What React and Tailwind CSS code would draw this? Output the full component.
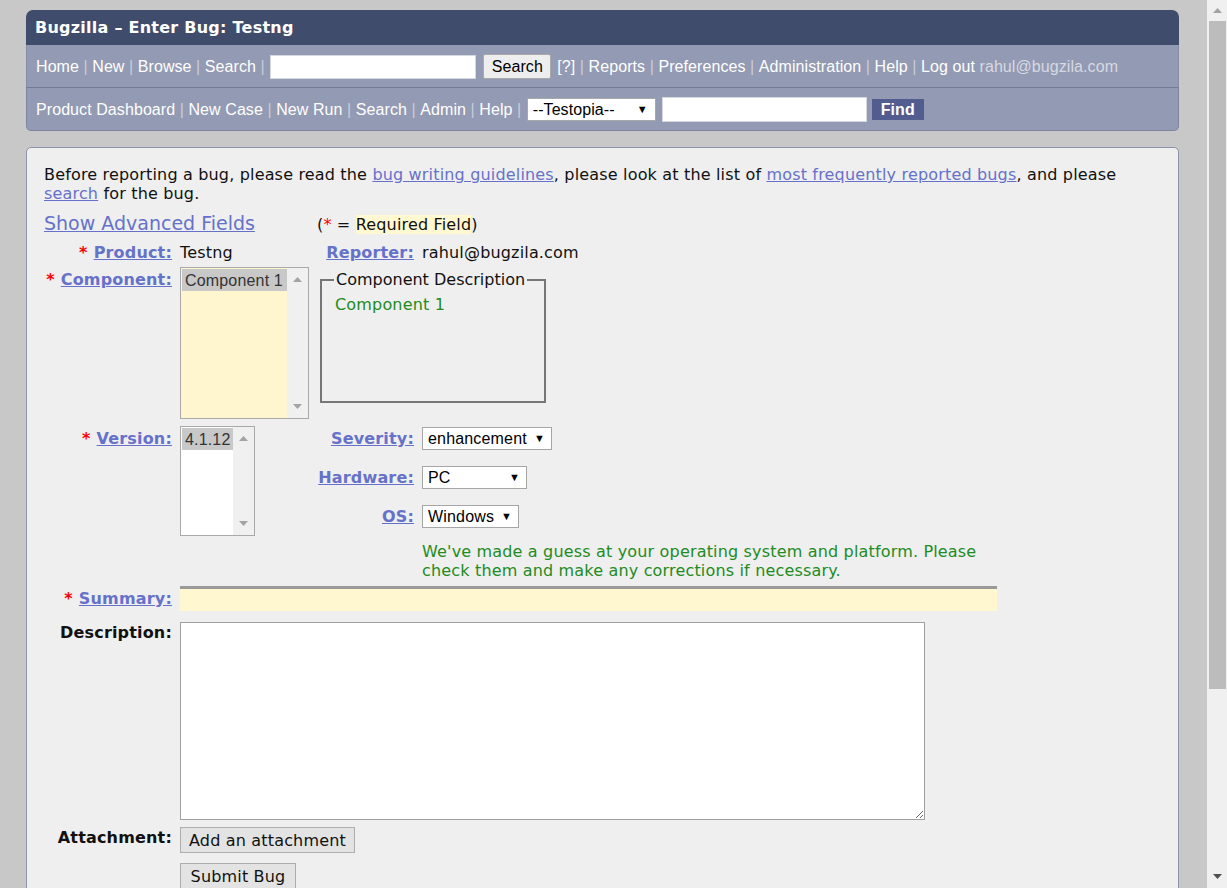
import React from "react";

const ARIAL = "font-['Liberation_Sans',Arial,sans-serif]";
const VERD = "font-['DejaVu_Sans',Verdana,sans-serif]";

function Sep() {
  return <span className="mx-[4.5px] text-[#c9ccda]">|</span>;
}

function Tri({ up, color }) {
  return (
    <svg width="9" height="5" viewBox="0 0 9 5">
      {up ? (
        <polygon points="0,5 9,5 4.5,0" fill={color} />
      ) : (
        <polygon points="0,0 9,0 4.5,5" fill={color} />
      )}
    </svg>
  );
}

function Header() {
  return (
    <div className={`${ARIAL} tracking-[0.08px]`}>
      <div className={`h-[35px] rounded-t-[7px] bg-[#404c6c] pl-[9px] pt-[1px] flex items-center ${VERD} font-bold text-[16px] tracking-[0.25px] text-white`}>
        Bugzilla – Enter Bug: Testng
      </div>
      <div className="h-[43px] bg-[#939ab3] border-x border-b border-x-[#858ca6] border-b-[#727a96] flex items-center pl-[9px] pt-[1px] text-[16px] text-white whitespace-nowrap">
        <span>Home</span>
        <Sep />
        <span>New</span>
        <Sep />
        <span>Browse</span>
        <Sep />
        <span>Search</span>
        <Sep />
        <div className="ml-[1px] w-[206px] h-[24px] bg-white border border-[#d6d8e0]" />
        <div className="ml-[7px] w-[68px] h-[25px] bg-[#eeeeee] border border-[#a9a9a9] rounded-[2px] text-black flex items-center justify-center">
          Search
        </div>
        <span className="ml-[6px]">[?]</span>
        <Sep />
        <span>Reports</span>
        <Sep />
        <span>Preferences</span>
        <Sep />
        <span>Administration</span>
        <Sep />
        <span>Help</span>
        <Sep />
        <span>Log out</span>
        <span className="ml-[4.5px] text-[#d6d9e2]">rahul@bugzila.com</span>
      </div>
      <div className="h-[43px] bg-[#939ab3] border-x border-b border-[#7e859f] rounded-b-[5px] flex items-center pl-[9px] pt-[1px] text-[16px] text-white whitespace-nowrap">
        <span>Product Dashboard</span>
        <Sep />
        <span>New Case</span>
        <Sep />
        <span>New Run</span>
        <Sep />
        <span>Search</span>
        <Sep />
        <span>Admin</span>
        <Sep />
        <span>Help</span>
        <Sep />
        <div className="ml-[1px] w-[129px] h-[23px] bg-white border border-[#a8a8a8] text-black flex items-center pl-[5px] pr-[7px] justify-between">
          <span>--Testopia--</span>
          <span className="text-[11px]">▼</span>
        </div>
        <div className="ml-[6px] w-[205px] h-[25px] bg-white border border-[#d6d8e0]" />
        <div className="ml-[5px] w-[52px] h-[21px] bg-[#525c8e] text-white font-bold flex items-center justify-center">
          Find
        </div>
      </div>
    </div>
  );
}

const LINK = "text-[#6671c9] underline";
const LBL = "w-[136px] shrink-0 text-right pr-[8px] font-bold whitespace-nowrap";

function Req() {
  return <span className="text-[#ff0000] mr-[6px]">*</span>;
}

function ListBox({ w, h, item, itemW, bg }) {
  return (
    <div className={`flex border border-[#a9a9a9] ${bg}`} style={{ width: w, height: h }}>
      <div className="flex-1 pt-[1px] pl-[1px]">
        <div className="h-[22px] bg-[#c8c8c8] text-[#333] pl-[3px] flex items-center font-['Liberation_Sans',Arial,sans-serif] text-[16px]" style={{ width: itemW }}>
          {item}
        </div>
      </div>
      <div className="w-[21px] bg-[#f0f0f0] flex flex-col items-center justify-between py-[9px]">
        <Tri up color="#a3a3a3" />
        <Tri color="#a3a3a3" />
      </div>
    </div>
  );
}

function Select({ w, text, arrowPad }) {
  return (
    <div
      className={`h-[23px] bg-white border border-[#a6a6a6] flex items-center justify-between pl-[5px] ${ARIAL} text-[16px] text-black`}
      style={{ width: w, paddingRight: arrowPad }}
    >
      <span>{text}</span>
      <span className="text-[11px]">▼</span>
    </div>
  );
}

function RightRow({ label, children, first }) {
  return (
    <div className={`flex items-center h-[23px] ${first ? "" : "mt-[16px]"}`}>
      <div className="w-[167px] shrink-0 text-right pr-[8px] font-bold">
        <span className={LINK}>{label}</span>
      </div>
      {children}
    </div>
  );
}

function Form() {
  return (
    <div className={`mt-[16px] h-[760px] bg-[#efefef] border border-[#8c92a8] rounded-t-[5px] pt-[17px] pl-[17px] ${VERD} text-[16px] leading-[19px] tracking-[0.17px] text-[#111]`}>
      <div className="whitespace-nowrap">
        Before reporting a bug, please read the <span className={LINK}>bug writing guidelines</span>, please look at the list of{" "}
        <span className={LINK}>most frequently reported bugs</span>, and please
        <br />
        <span className={LINK}>search</span> for the bug.
      </div>

      <div className="mt-[8px] h-[26px] flex items-center">
        <div className="w-[273px] shrink-0">
          <span className={`${LINK} text-[19px] tracking-normal`}>Show Advanced Fields</span>
        </div>
        <div>
          (<span className="text-[#ff0000]">*</span> = <span className="bg-[#fff8d0]">Required Field</span>)
        </div>
      </div>

      <div className="mt-[5px] h-[20px] flex items-center">
        <div className={LBL}>
          <Req />
          <span className={LINK}>Product:</span>
        </div>
        <div className="w-[138px] shrink-0">Testng</div>
        <div className="w-[104px] shrink-0 text-right pr-[8px] font-bold">
          <span className={LINK}>Reporter:</span>
        </div>
        <div>rahul@bugzila.com</div>
      </div>

      <div className="mt-[5px] flex items-start">
        <div className={`${LBL} pt-[3px]`}>
          <Req />
          <span className={LINK}>Component:</span>
        </div>
        <ListBox w={129} h={152} item="Component 1" itemW={105} bg="bg-[#fff6d0]" />
        <fieldset className="ml-[11px] mt-[3px] w-[226px] h-[133px] border-2 border-[#767676] px-[12px] pt-[6px]">
          <legend className="px-[2px] whitespace-nowrap tracking-normal">Component Description</legend>
          <div className="text-[#228b22] ml-[1px]">Component 1</div>
        </fieldset>
      </div>

      <div className="mt-[7px] flex items-start">
        <div className={`${LBL} pt-[3px]`}>
          <Req />
          <span className={LINK}>Version:</span>
        </div>
        <ListBox w={75} h={110} item="4.1.12" itemW={51} bg="bg-white" />
        <div className="pt-[1px]">
          <RightRow label="Severity:" first>
            <Select w={130} text="enhancement" arrowPad={6} />
          </RightRow>
          <RightRow label="Hardware:">
            <Select w={105} text="PC" arrowPad={6} />
          </RightRow>
          <RightRow label="OS:">
            <Select w={97} text="Windows" arrowPad={6} />
          </RightRow>
          <div className="mt-[14px] ml-[167px] text-[#228b22] whitespace-nowrap">
            We've made a guess at your operating system and platform. Please
            <br />
            check them and make any corrections if necessary.
          </div>
        </div>
      </div>

      <div className="mt-[6px] flex items-center">
        <div className={LBL}>
          <Req />
          <span className={LINK}>Summary:</span>
        </div>
        <div className="w-[817px] h-[25px] bg-[#fff7d0] border-t-[3px] border-[#9a9a9a]" />
      </div>

      <div className="mt-[11px] flex items-start">
        <div className={`${LBL} pt-[1px] text-[#111]`}>Description:</div>
        <textarea className="w-[745px] h-[198px] bg-white border border-[#a0a0a0] outline-none" readOnly />
      </div>

      <div className="mt-[7px] flex items-start">
        <div className={`${LBL} pt-[1px] text-[#111]`}>Attachment:</div>
        <button className="w-[175px] h-[26px] bg-[#e3e3e3] border border-[#adadad] text-[#111] leading-[19px]">
          Add an attachment
        </button>
      </div>

      <div className="mt-[10px] flex items-start">
        <div className="w-[136px] shrink-0" />
        <button className="w-[116px] h-[26px] bg-[#e3e3e3] border border-[#adadad] text-[#111] leading-[19px]">
          Submit Bug
        </button>
      </div>
    </div>
  );
}

function Scrollbar() {
  return (
    <div className="w-[20px] h-[888px] bg-[#f0f0f0] flex flex-col">
      <div className="h-[21px] flex items-center justify-center">
        <Tri up color="#a3a3a3" />
      </div>
      <div className="ml-[2px] w-[17px] h-[668px] bg-[#bcbcbc]" />
      <div className="flex-1" />
      <div className="h-[24px] flex items-center justify-center">
        <Tri color="#505050" />
      </div>
    </div>
  );
}

export default function App() {
  return (
    <div className="flex w-[1227px] h-[888px] overflow-hidden bg-[#c8c8c8]">
      <div className="w-[1207px] shrink-0 pt-[10px] pl-[26px]">
        <div className="w-[1153px]">
          <Header />
          <Form />
        </div>
      </div>
      <Scrollbar />
    </div>
  );
}
